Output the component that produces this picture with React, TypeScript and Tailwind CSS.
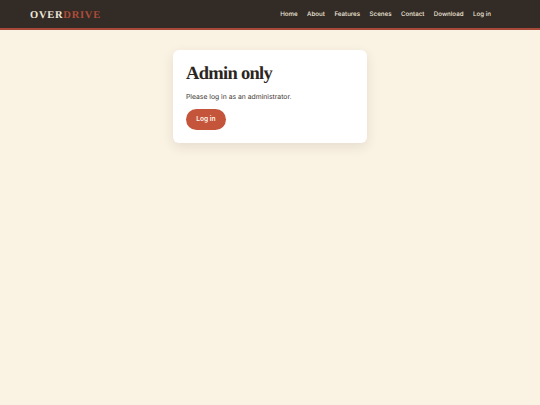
const navLinks = ['Home', 'About', 'Features', 'Scenes', 'Contact', 'Download', 'Log in'];

export default function App() {
  return (
    <div className="min-h-[405px] bg-[#faf2e3] font-['Inter',sans-serif] antialiased [text-rendering:geometricPrecision]">
      {/* Header */}
      <header className="flex h-[30px] items-center justify-between border-b-2 border-[#a84a3a] bg-[#332b26] pl-[30px] pr-[49px]">
        <div className="pt-[3px] font-['Liberation_Serif',serif] text-[10.5px] font-bold tracking-[0.75px] text-[#f0e8d8]">
          OVER<span className="text-[#b04d3a]">DRIVE</span>
        </div>
        <nav className="flex gap-[9.5px] pt-[2px]">
          {navLinks.map((link) => (
            <a key={link} className="text-[6.2px] font-medium text-[#efe7d8]">
              {link}
            </a>
          ))}
        </nav>
      </header>

      {/* Card */}
      <main className="flex justify-center pt-5">
        <div className="h-[93px] w-[194px] rounded-[6px] bg-white px-[13px] pt-[13px] shadow-[0_4px_12px_rgba(50,42,37,0.1)]">
          <h1 className="font-['Liberation_Serif',serif] text-[18.5px] leading-[22px] font-bold tracking-[-0.7px] text-[#2b2521]">Admin only</h1>
          <p className="mt-[6px] text-[6.8px] leading-[11px] text-[#3d3631]">Please log in as an administrator.</p>
          <button className="mt-[7px] flex h-[21px] w-10 items-center justify-center rounded-full bg-[#c4553b] text-[6.6px] font-semibold text-[#fdf6ea]">
            Log in
          </button>
        </div>
      </main>
    </div>
  );
}
